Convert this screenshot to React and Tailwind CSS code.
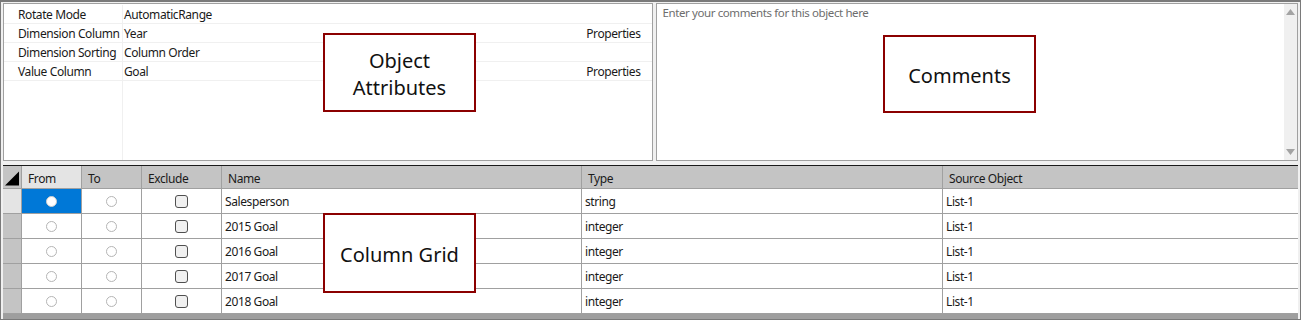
import React from "react";

const props = [
  { label: "Rotate Mode", value: "AutomaticRange", link: "" },
  { label: "Dimension Column", value: "Year", link: "Properties" },
  { label: "Dimension Sorting", value: "Column Order", link: "" },
  { label: "Value Column", value: "Goal", link: "Properties" },
];

const rows = [
  { name: "Salesperson", type: "string", src: "List-1" },
  { name: "2015 Goal", type: "integer", src: "List-1" },
  { name: "2016 Goal", type: "integer", src: "List-1" },
  { name: "2017 Goal", type: "integer", src: "List-1" },
  { name: "2018 Goal", type: "integer", src: "List-1" },
];

function Radio({ active }) {
  return (
    <span
      className={
        "inline-block w-[11px] h-[11px] rounded-full border " +
        (active ? "border-[#cfcfcf] bg-white" : "border-[#b5b5b5] bg-white")
      }
    />
  );
}

function Check() {
  return (
    <span className="inline-block w-[13px] h-[13px] rounded-[3px] border border-[#4f4f4f] bg-[#f0f0f0]" />
  );
}

function Callout({ className, children }) {
  return (
    <div
      className={
        "absolute border-2 border-[#8b0000] bg-white flex items-center justify-center text-center text-[20px] leading-[27px] text-[#111] tracking-normal " +
        className
      }
    >
      {children}
    </div>
  );
}

export default function App() {
  return (
    <div
      className="relative w-[1301px] h-[320px] bg-[#f0f0f0] border border-t-2 border-[#7a7a7a] text-[12px] tracking-[-0.4px] text-[#1a1a1a] overflow-hidden"
      style={{ fontFamily: '"Noto Sans", "Liberation Sans", sans-serif' }}
    >
      {/* top panels */}
      <div className="flex gap-[3px] px-[2px] pt-[1px] h-[159px]">
        <div className="w-[650px] h-[158px] bg-white border border-[#a0a0a0] flex pt-[1px]">
          <div className="w-[119px] border-r border-[#f0f0f0] flex flex-col">
            {props.map((p) => (
              <div
                key={p.label}
                className="h-[19px] border-b border-[#f0f0f0] pl-[14px] leading-[20px] whitespace-nowrap overflow-hidden"
              >
                {p.label}
              </div>
            ))}
          </div>
          <div className="flex-1 flex flex-col">
            {props.map((p) => (
              <div
                key={p.label}
                className="h-[19px] border-b border-[#f0f0f0] pl-[1px] pr-[11px] flex justify-between leading-[19px]"
              >
                <span>{p.value}</span>
                <span>{p.link}</span>
              </div>
            ))}
          </div>
        </div>
        <div className="w-[643px] h-[158px] bg-white border border-[#a0a0a0] flex">
          <div className="flex-1 pl-[6px] pt-[1px] text-[11.5px] text-[#6d6d6d] leading-[15px]">
            Enter your comments for this object here
          </div>
          <div className="w-[13px] bg-[#f0f0f0] flex flex-col items-center justify-between py-[5px]">
            <svg width="9" height="6" viewBox="0 0 9 6">
              <path d="M0 6 L4.5 0 L9 6 Z" fill="#a3a3a3" />
            </svg>
            <svg width="9" height="6" viewBox="0 0 9 6">
              <path d="M0 0 L4.5 6 L9 0 Z" fill="#a3a3a3" />
            </svg>
          </div>
        </div>
      </div>

      {/* grid */}
      <div className="mt-[4px] mx-[2px] border-t border-[#1a1a1a] bg-[#9e9e9e] h-[154px]">
        <div className="flex h-[23px] bg-[#c4c4c4] border-b border-[#a0a0a0]">
          <div className="w-[19px] border-r border-[#a0a0a0] flex items-end justify-end p-[2px]">
            <svg width="15" height="15" viewBox="0 0 15 15">
              <path d="M15 0 L15 15 L0 15 Z" fill="#000" />
            </svg>
          </div>
          <div className="w-[60px] bg-[#e4e4e4] border-r border-[#a0a0a0] pl-[6px] leading-[26px]">From</div>
          <div className="w-[60px] border-r border-[#a0a0a0] pl-[6px] leading-[26px]">To</div>
          <div className="w-[80px] border-r border-[#a0a0a0] pl-[6px] leading-[26px]">Exclude</div>
          <div className="w-[360px] border-r border-[#a0a0a0] pl-[6px] leading-[26px]">Name</div>
          <div className="w-[361px] border-r border-[#a0a0a0] pl-[6px] leading-[26px]">Type</div>
          <div className="flex-1 pl-[6px] leading-[26px]">Source Object</div>
        </div>
        {rows.map((r, i) => (
          <div key={r.name} className="flex h-[25px] bg-white border-b border-[#a0a0a0]">
            <div
              className={
                "w-[19px] border-r border-[#a0a0a0] " +
                (i === 0 ? "bg-[#e4e4e4]" : "bg-[#c4c4c4]")
              }
            />
            <div
              className={
                "w-[60px] border-r border-[#a0a0a0] flex items-center justify-center " +
                (i === 0 ? "bg-[#0078d7]" : "")
              }
            >
              <Radio active={i === 0} />
            </div>
            <div className="w-[60px] border-r border-[#a0a0a0] flex items-center justify-center">
              <Radio />
            </div>
            <div className="w-[80px] border-r border-[#a0a0a0] flex items-center justify-center">
              <Check />
            </div>
            <div className="w-[360px] border-r border-[#a0a0a0] pl-[3px] leading-[25px]">{r.name}</div>
            <div className="w-[361px] border-r border-[#a0a0a0] pl-[3px] leading-[25px]">{r.type}</div>
            <div className="flex-1 pl-[3px] leading-[25px]">{r.src}</div>
          </div>
        ))}
      </div>

      <Callout className="left-[322px] top-[31px] w-[153px] h-[79px] pt-[2px]">
        Object
        <br />
        Attributes
      </Callout>
      <Callout className="left-[882px] top-[33px] w-[153px] h-[78px] pt-[2px]">Comments</Callout>
      <Callout className="left-[322px] top-[211px] w-[153px] h-[80px] pt-[3px]">Column Grid</Callout>
    </div>
  );
}
